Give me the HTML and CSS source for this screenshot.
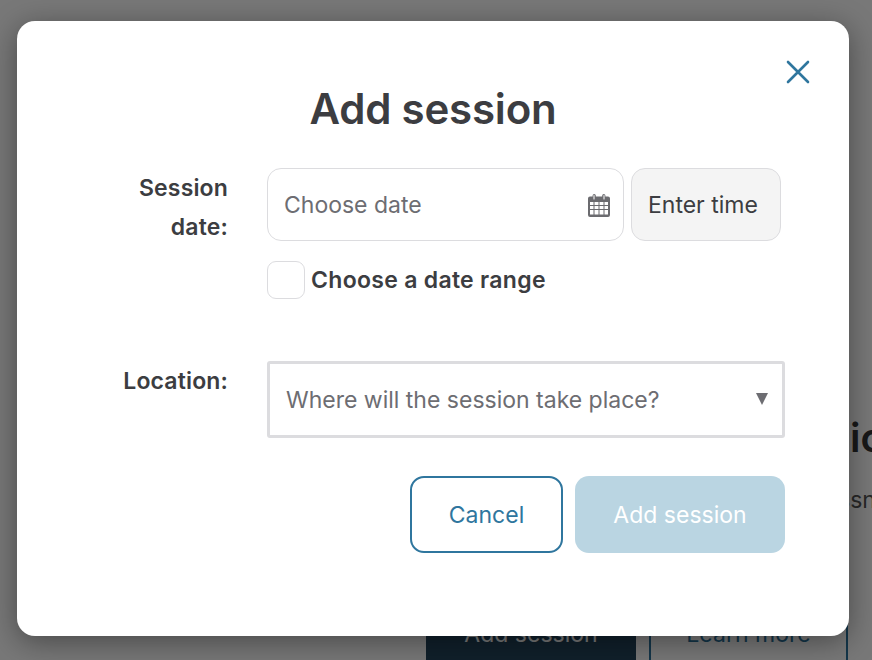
FILE: index.html
```html
<!DOCTYPE html>
<html lang="en">
<head>
<meta charset="utf-8">
<title>Add session</title>
<link rel="stylesheet" href="styles.css">
</head>
<body>
<div class="behind">
  <h2 class="behind-title">io</h2>
  <p class="behind-text">ssn</p>
  <div class="behind-actions">
    <span class="behind-primary">Add session</span>
    <span class="behind-secondary">Learn more</span>
  </div>
</div>
<div class="overlay">
  <div class="modal" role="dialog" aria-labelledby="modal-title">
    <button class="close" type="button" aria-label="Close">
      <svg viewBox="0 0 24 24" width="24" height="24" fill="none" stroke="currentColor" stroke-width="2.6" stroke-linecap="round"><path d="M2 2 L22 22 M22 2 L2 22"/></svg>
    </button>
    <h1 id="modal-title" class="title">Add session</h1>
    <form class="form">
      <label class="label label-date">Session date:</label>
      <div class="field">
        <div class="date-row">
          <div class="date-input">
            <span class="placeholder">Choose date</span>
            <svg class="cal" viewBox="0 0 24 24" width="24" height="24" aria-hidden="true">
              <path fill="#6b6b6f" d="M3 3.500h2.600V2.600a1.600 1.600 0 0 1 3.200 0v.9h6.400v-.9a1.600 1.600 0 0 1 3.200 0v.9H21a2 2 0 0 1 2 2V22a2 2 0 0 1-2 2H3a2 2 0 0 1-2-2V5.500a2 2 0 0 1 2-2z"/>
              <path fill="#fff" d="M6.500 2.600a.5.5 0 0 1 1 0v3.400a.5.5 0 0 1-1 0zM16.500 2.600a.5.5 0 0 1 1 0v3.400a.5.5 0 0 1-1 0z"/>
              <path fill="#fff" d="M3 9h3.500v3H3zM7.500 9h4v3h-4zM12.500 9h4v3h-4zM17.500 9H21v3h-3.500zM3 13h3.500v3H3zM7.500 13h4v3h-4zM12.500 13h4v3h-4zM17.500 13H21v3h-3.500zM3 17h3.500v4.500H3zM7.500 17h4v4.500h-4zM12.500 17h4v4.500h-4zM17.500 17H21v4.500h-3.500z"/>
            </svg>
          </div>
          <button class="time-btn" type="button">Enter time</button>
        </div>
        <div class="range-row">
          <span class="checkbox"></span>
          <span class="range-label">Choose a date range</span>
        </div>
      </div>
      <label class="label label-location">Location:</label>
      <div class="field">
        <div class="select">
          <span class="placeholder">Where will the session take place?</span>
          <span class="caret"></span>
        </div>
        <div class="actions">
          <button class="btn btn-cancel" type="button">Cancel</button>
          <button class="btn btn-add" type="button">Add session</button>
        </div>
      </div>
    </form>
  </div>
</div>
</body>
</html>
```
FILE: styles.css
```css
* { box-sizing: border-box; }
html, body { margin: 0; height: 660px; overflow: hidden; }
body { font-family: Inter, "Liberation Sans", sans-serif; color: #3c3d41; background: #fff; position: relative; }

.behind { position: absolute; inset: 0; overflow: hidden; white-space: nowrap; padding-top: 413px; }
.behind-title { margin: 0; padding-left: 850px; font-size: 40px; line-height: 50px; font-weight: 600; color: #333; }
.behind-text { margin: 24px 0 0; padding-left: 838px; font-size: 23px; line-height: 26px; color: #555; }
.behind-actions { display: flex; gap: 13px; margin: 82px 0 0 426px; }
.behind-primary, .behind-secondary { width: 210px; height: 77px; display: flex; align-items: center; justify-content: center; font-size: 23px; }
.behind-primary { background: #22455c; color: #fff; }
.behind-secondary { width: 199px; border: 2px solid #2c739e; color: #2c739e; }

.overlay { position: absolute; inset: 0; background: rgba(0, 0, 0, 0.53); padding: 21px 23px 24px 17px; }

.modal { position: relative; height: 615px; background: #fff; border-radius: 18px; box-shadow: 0 6px 30px rgba(0, 0, 0, 0.4); padding-top: 59px; }

.close { position: absolute; top: 39px; right: 39px; width: 24px; height: 24px; padding: 0; border: 0; background: none; color: #2f769e; }
.close svg { display: block; }

.title { margin: 0 0 30px; text-align: center; font-size: 42px; line-height: 58px; font-weight: 600; color: #3c3d41; letter-spacing: -0.2px; }

.form { display: grid; grid-template-columns: 211px 518px; column-gap: 39px; }

.label { text-align: right; font-size: 23px; line-height: 39px; font-weight: 600; color: #3c3d41; letter-spacing: 0.15px; padding-top: 1px; }
.label-date { padding-left: 100px; }
.label-location { margin-top: 62px; }

.date-row { display: flex; gap: 7px; }
.date-input { width: 357px; height: 73px; border: 1px solid #dcdcdf; border-radius: 14px; padding: 0 12px 0 16px; display: flex; align-items: center; justify-content: space-between; background: #fff; }
.placeholder { font-size: 23px; color: #6d6d72; }
.cal { display: block; flex: none; }
.time-btn { width: 150px; height: 73px; border: 1px solid #dcdcdf; border-radius: 14px; background: #f4f4f4; color: #3c3d41; font: 400 23px Inter, "Liberation Sans", sans-serif; padding: 0 0 0 16px; text-align: left; }

.range-row { display: flex; align-items: center; gap: 6px; margin-top: 20px; }
.checkbox { width: 38px; height: 38px; border: 1px solid #dcdcdf; border-radius: 9px; background: #fff; }
.range-label { font-size: 23px; font-weight: 600; color: #3c3d41; letter-spacing: 0.3px; }

.select { margin-top: 62px; height: 77px; border: 3px solid #dcdcdf; border-radius: 3px; padding: 0 14px 0 16px; display: flex; align-items: center; justify-content: space-between; }
.caret { width: 0; height: 0; border-left: 6px solid transparent; border-right: 6px solid transparent; border-top: 12px solid #6d6d72; margin-bottom: 2px; }

.actions { display: flex; justify-content: flex-end; gap: 12px; margin-top: 38px; }
.btn { height: 77px; border-radius: 14px; font: 400 23px Inter, "Liberation Sans", sans-serif; padding: 0; }
.btn-cancel { width: 153px; background: #fff; border: 2px solid #2f769e; color: #2f769e; }
.btn-add { width: 210px; background: #bad5e2; border: 0; color: #fff; }
```
